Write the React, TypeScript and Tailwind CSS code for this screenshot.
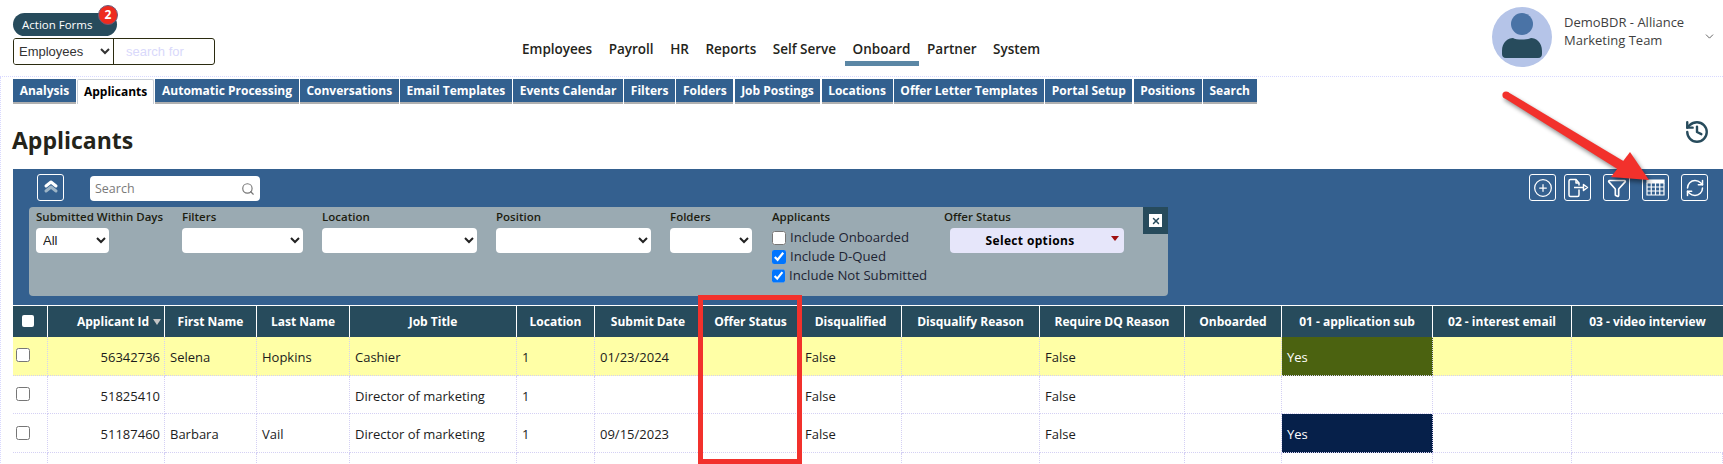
import { ChevronDown, CirclePlus, Funnel, History, RefreshCw, Search, X } from "lucide-react";

const tabs = ["Analysis", "Applicants", "Automatic Processing", "Conversations", "Email Templates", "Events Calendar", "Filters", "Folders", "Job Postings", "Locations", "Offer Letter Templates", "Portal Setup", "Positions", "Search"];
const nav = ["Employees", "Payroll", "HR", "Reports", "Self Serve", "Onboard", "Partner", "System"];
const heads = ["", "Applicant Id", "First Name", "Last Name", "Job Title", "Location", "Submit Date", "Offer Status", "Disqualified", "Disqualify Reason", "Require DQ Reason", "Onboarded", "01 - application sub", "02 - interest email", "03 - video interview"];
const rows = [
  { id: "56342736", first: "Selena", last: "Hopkins", job: "Cashier", date: "01/23/2024", bg: "bg-[#ffffa6]", yes: "bg-[#4b6210]" },
  { id: "51825410", first: "", last: "", job: "Director of marketing", date: "", bg: "bg-white", yes: "" },
  { id: "51187460", first: "Barbara", last: "Vail", job: "Director of marketing", date: "09/15/2023", bg: "bg-white", yes: "bg-[#06204a]" },
];
const grid = "grid grid-cols-[35px_117px_92px_93px_167px_78px_107px_98px_102px_138px_145px_97px_151px_139px_151px]";
const cell = "border-r border-b border-dotted border-[#d4d0f4] flex items-center pl-[5px] pt-[4px] text-[13px] text-[#1c1c1c]";
const label = "block h-[21px] whitespace-nowrap pt-[1px] text-[11.5px] font-semibold leading-[18px] text-[#1d1d10]";

function Field({ title, width, value }: { title: string; width: string; value?: string }) {
  return (
    <div className="flex flex-col">
      <span className={label}>{title}</span>
      <select className={`${width} h-[25px] rounded-[4px] bg-white pl-[6px] text-[13px] text-[#222]`} defaultValue={value}>
        <option>{value}</option>
      </select>
    </div>
  );
}

function ToolButton({ children }: { children: React.ReactNode }) {
  return <button className="flex h-[27px] w-[27px] items-center justify-center rounded-[3px] border border-white text-white">{children}</button>;
}

function Check({ text, checked }: { text: string; checked?: boolean }) {
  return (
    <label className="flex h-[19px] items-center gap-[4px] whitespace-nowrap pt-[1px] text-[13.2px] text-[#1d2433]">
      <input type="checkbox" defaultChecked={checked} className="m-0 h-[14px] w-[14px]" />
      {text}
    </label>
  );
}

export default function App() {
  return (
    <div className="relative h-[464px] w-[1723px] overflow-hidden bg-white font-['Open_Sans',sans-serif]">
      <header className="flex h-[77px] border-b border-dotted border-[#d8d8ff]">
        <div className="ml-[13px] mt-[13px] w-[202px]">
          <div className="relative flex h-[23px] w-[104px] items-center rounded-full bg-[#274b5c] pl-[9px] text-[11.5px] text-white">
            Action Forms
            <span className="absolute right-[-1px] top-[-8px] flex h-[20px] w-[20px] items-center justify-center rounded-full border border-[#6b5b7b] bg-[#ee2a1e] text-[12px] font-bold text-white">2</span>
          </div>
          <div className="mt-[2px] flex h-[27px] w-[202px] overflow-hidden rounded-[3px] border border-[#2b2b10]">
            <select className="h-full w-[101px] border-r border-[#2b2b10] bg-white pl-[1px] text-[13px] font-['Liberation_Sans',sans-serif] text-[#333]">
              <option>Employees</option>
            </select>
            <input placeholder="search for" className="w-[100px] pl-[12px] text-[13px] font-['Liberation_Sans',sans-serif] outline-none placeholder:text-[#d9d9fb]" />
          </div>
        </div>
        <nav className="ml-[307px] mt-[39px] flex h-[27px] items-start gap-[16.5px] text-[13.5px] font-semibold text-[#24241a]">
          {nav.map((n) => (
            <span key={n} className={n === "Onboard" ? "relative" : ""}>
              {n}
              {n === "Onboard" && <span className="absolute left-[-8px] right-[-8px] top-[22px] h-[5px] bg-[#5b87a5]" />}
            </span>
          ))}
        </nav>
        <div className="ml-auto mt-[7px] flex items-start">
          <svg width="60" height="60" viewBox="0 0 60 60" className="mr-[12px]">
            <ellipse cx="30" cy="30" rx="30" ry="30" fill="#b5c4e8" />
            <circle cx="30" cy="17" r="11" fill="#4a73a6" />
            <path d="M10 44c0-9 6-13 11-13 3 2 15 2 18 0 5 0 11 4 11 13v3c0 2-1 4-4 4H14c-3 0-4-2-4-4z" fill="#274b5c" />
          </svg>
          <div className="mt-[6px] w-[139px] text-[13px] leading-[18px] text-[#3f3f3f]">DemoBDR - Alliance Marketing Team</div>
          <ChevronDown size={13} strokeWidth={1.5} className="mr-[7px] mt-[23px] text-[#444]" />
        </div>
      </header>

      <div className="border-l border-dotted border-[#d8d8ff]">
        <div className="ml-[12px] pt-[2px]">
          <div className="flex h-[25px] gap-[1.2px]">
            {tabs.map((t) =>
              t === "Applicants" ? (
                <span key={t} className="flex h-[25px] items-center rounded-t-[2px] border border-b-0 border-[#c8cfd8] bg-white px-[6px] text-[12px] font-bold text-black">{t}</span>
              ) : (
                <span key={t} className="flex h-[25px] items-center border-b-2 border-[#b0b0b0] bg-[#32608f] px-[6.63px] text-[12px] font-bold text-white">{t}</span>
              )
            )}
          </div>
        </div>

        <div className="flex h-[65px] items-center justify-between pl-[11px] pr-[13px]">
          <h1 className="mt-[7px] text-[23px] font-bold text-[#24241a]">Applicants</h1>
          <History size={26} strokeWidth={2.2} className="mb-[9px] text-[#274b5c]" />
        </div>

        <section className="ml-[12px] flex h-[136px] flex-col bg-[#34608f]">
          <div className="flex h-[38px] items-start pl-[24px] pr-[15px] pt-[5px]">
            <button className="flex h-[27px] w-[27px] items-center justify-center rounded-[3px] border border-white">
              <svg width="16" height="18" viewBox="0 0 16 18" fill="none" strokeWidth="3" strokeLinecap="round" strokeLinejoin="round">
                <path d="M3 12l5-4 5 4" stroke="#9db4c6" />
                <path d="M3 7l5-4 5 4" stroke="#ffffff" />
              </svg>
            </button>
            <div className="ml-[26px] mt-[2px] flex h-[25px] w-[170px] items-center justify-between rounded-[4px] bg-white pl-[5px] pr-[5px] pt-[1px] text-[12.5px] text-[#7a7a7a]">
              Search
              <Search size={14} className="text-[#777]" />
            </div>
            <div className="ml-auto flex gap-[8px]">
              <ToolButton><CirclePlus size={20} strokeWidth={1.5} /></ToolButton>
              <div className="flex gap-[12px]">
                <ToolButton>
                  <svg width="22" height="20" viewBox="0 0 22 20" fill="none" stroke="currentColor" strokeWidth="1.5" strokeLinejoin="round">
                    <path d="M12 11.5V17a1.5 1.5 0 0 1-1.5 1.5h-7A1.5 1.5 0 0 1 2 17V3a1.5 1.5 0 0 1 1.5-1.5H9L12 5v2.5" />
                    <path d="M9 1.5V5h3" />
                    <path d="M7 9.5h10" />
                    <path d="M16.5 6.5l4 3-4 3z" />
                  </svg>
                </ToolButton>
                <ToolButton><Funnel size={20} strokeWidth={2} /></ToolButton>
                <ToolButton>
                  <svg width="19" height="17" viewBox="0 0 19 17" fill="none" stroke="currentColor" strokeWidth="1.2">
                    <path d="M1 1h17v3H1z" fill="currentColor" />
                    <path d="M1 4v12h17V4M1 8h17M1 12h17M5.25 4v12M9.5 4v12M13.75 4v12" />
                  </svg>
                </ToolButton>
                <ToolButton><RefreshCw size={20} strokeWidth={1.8} /></ToolButton>
              </div>
            </div>
          </div>
          <div className="ml-[16px] flex h-[89px] w-[1139px]">
            <div className="flex flex-1 gap-[19px] rounded-l-[4px] bg-[#9aaab2] pl-[7px]">
              <div className="flex w-[127px] flex-col">
                <span className={label}>Submitted Within Days</span>
                <select className="h-[25px] w-[73px] rounded-[4px] bg-white pl-[3px] font-['Liberation_Sans',sans-serif] text-[13px] text-[#222]"><option>All</option></select>
              </div>
              <Field title="Filters" width="w-[121px]" />
              <Field title="Location" width="w-[155px]" />
              <Field title="Position" width="w-[155px]" />
              <Field title="Folders" width="w-[82px]" />
              <div className="ml-[1px] w-[153px]">
                <span className={label}>Applicants</span>
                <Check text="Include Onboarded" />
                <Check text="Include D-Qued" checked />
                <Check text="Include Not Submitted" checked />
              </div>
              <div className="flex flex-col">
                <span className={label}>Offer Status</span>
                <button className="relative ml-[6px] h-[25px] w-[174px] rounded-[4px] bg-[#e6e6fa] pr-[14px] text-[12px] font-bold tracking-[0.35px] text-black">
                  Select options
                  <span className="absolute right-[5px] top-[8px] h-0 w-0 border-x-[4px] border-t-[5px] border-x-transparent border-t-[#a01010]" />
                </button>
              </div>
            </div>
            <div className="flex w-[25px] flex-col">
              <div className="flex h-[27px] items-center justify-center bg-[#274b5c]">
                <span className="flex h-[13px] w-[13px] items-center justify-center bg-white"><X size={10} strokeWidth={3.5} className="text-[#274b5c]" /></span>
              </div>
              <div className="flex-1 rounded-br-[4px] bg-[#9aaab2]" />
            </div>
          </div>
        </section>

        <div className="ml-[12px]">
          <div className={`${grid} h-[32px] border-t border-white bg-[#274b5c]`}>
            {heads.map((h, i) => (
              <div key={i} className={`flex items-center whitespace-nowrap border-r border-white text-[12px] font-bold text-white ${i === 1 ? "justify-end pr-[3px]" : "justify-center"} ${i === 14 ? "border-r-0" : ""}`}>
                {i === 0 ? <span className="mb-[1px] mr-[5px] h-[12px] w-[12px] rounded-[2px] bg-white" /> : h}
                {i === 1 && <span className="ml-[4px] h-0 w-0 border-x-[4px] border-t-[6px] border-x-transparent border-t-[#c4c4c4]" />}
              </div>
            ))}
          </div>
          {rows.map((r) => (
            <div key={r.id} className={`${grid} h-[38.7px] ${r.bg}`}>
              <div className="flex items-center border-b border-r border-dotted border-[#d4d0f4] pb-[1px] pl-[3px]"><input type="checkbox" className="m-0 h-[14px] w-[14px]" /></div>
              <div className={`${cell} justify-end pr-[4px]`}>{r.id}</div>
              <div className={cell}>{r.first}</div>
              <div className={cell}>{r.last}</div>
              <div className={cell}>{r.job}</div>
              <div className={cell}>1</div>
              <div className={cell}>{r.date}</div>
              <div className={cell} />
              <div className={`${cell} pl-[3px]`}>False</div>
              <div className={cell} />
              <div className={cell}>False</div>
              <div className={cell} />
              <div className={`${cell} pl-[3px] ${r.yes} ${r.yes ? "text-white" : ""}`}>{r.yes ? "Yes" : ""}</div>
              <div className={cell} />
              <div className={`${cell} border-r-0`} />
            </div>
          ))}
          <div className={`${grid} h-[12px]`}>
            {heads.map((_, i) => <div key={i} className="border-r border-dotted border-[#d4d0f4]" />)}
          </div>
        </div>
      </div>

      <div className="pointer-events-none absolute left-[698px] top-[295px] h-[169px] w-[104px] border-[5px] border-[#f2312c]" />
      <svg className="pointer-events-none absolute left-[1490px] top-[80px] drop-shadow-[2px_3px_2px_rgba(0,0,0,0.45)]" width="180" height="120" viewBox="1490 80 180 120" fill="#f2312c">
        <circle cx="1506" cy="95" r="3.6" />
        <polygon points="1507.8,92 1624.6,161.7 1619.4,170.3 1504.2,98" />
        <polygon points="1630,152 1649,180 1611,177" />
      </svg>
    </div>
  );
}
